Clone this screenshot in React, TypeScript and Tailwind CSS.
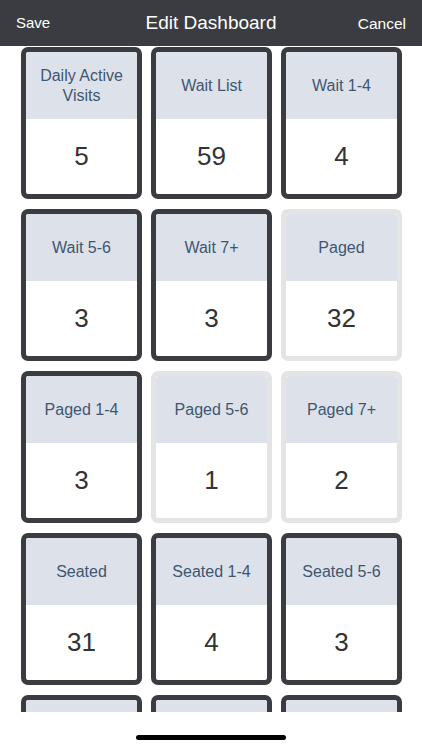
type Tile = { label: string; value: string; on: boolean }

const tiles: Tile[] = [
  { label: 'Daily Active Visits', value: '5', on: true },
  { label: 'Wait List', value: '59', on: true },
  { label: 'Wait 1-4', value: '4', on: true },
  { label: 'Wait 5-6', value: '3', on: true },
  { label: 'Wait 7+', value: '3', on: true },
  { label: 'Paged', value: '32', on: false },
  { label: 'Paged 1-4', value: '3', on: true },
  { label: 'Paged 5-6', value: '1', on: false },
  { label: 'Paged 7+', value: '2', on: false },
  { label: 'Seated', value: '31', on: true },
  { label: 'Seated 1-4', value: '4', on: true },
  { label: 'Seated 5-6', value: '3', on: true },
  // next row only peeks in under the fold, nothing of its text shows
  { label: '', value: '', on: true },
  { label: '', value: '', on: true },
  { label: '', value: '', on: true },
]

function Card({ tile }: { tile: Tile }) {
  return (
    <div
      className={
        tile.on
          ? 'flex h-[152px] flex-col overflow-hidden rounded-[7px] border-[5px] border-[#3a3c41] bg-white'
          : 'flex h-[152px] flex-col overflow-hidden rounded-[7px] border-[5px] border-[#e4e4e4] bg-white'
      }
    >
      <div className="flex h-[67px] shrink-0 items-center justify-center rounded-t-[3px] bg-[#dde2ea] px-2 text-center text-[16px] leading-[20px] text-[#3e5672]">
        {tile.label}
      </div>
      <div className="flex flex-1 items-center justify-center text-[26px] text-[#333333]">{tile.value}</div>
    </div>
  )
}

export default function App() {
  return (
    <div className="flex h-[750px] w-[422px] flex-col bg-white" style={{ fontFamily: '"Liberation Sans", Arial, sans-serif' }}>
      <header className="flex h-[46px] shrink-0 items-center justify-between bg-[#3a3c41] px-[16px] pt-[1px] text-white">
        <span className="w-[60px] text-[15px]">Save</span>
        <span className="text-[19px]">Edit Dashboard</span>
        <span className="w-[60px] text-right text-[15.5px]">Cancel</span>
      </header>

      <div className="h-[666px] shrink-0 overflow-hidden pt-[1px] pl-[21px] pr-[20px]">
        <div className="grid grid-cols-3 gap-x-[9px] gap-y-[10px]">
          {tiles.map((t, i) => (
            <Card key={i} tile={t} />
          ))}
        </div>
      </div>

      <div className="flex flex-1 items-start justify-center pt-[23px]">
        <div className="h-[5px] w-[150px] rounded-full bg-black" />
      </div>
    </div>
  )
}
